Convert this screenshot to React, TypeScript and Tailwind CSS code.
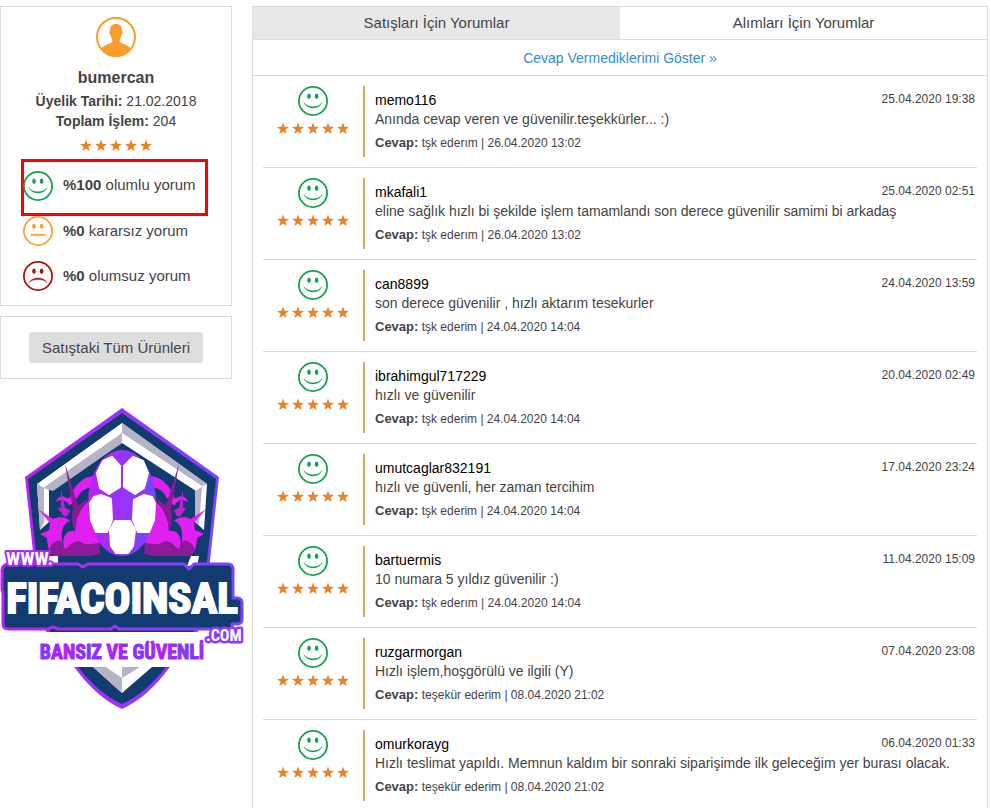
import React from "react";

type Mood = "good" | "neutral" | "bad";

const comments = [
  { user: "memo116", text: "Anında cevap veren ve güvenilir.teşekkürler... :)", reply: "tşk ederım | 26.04.2020 13:02", date: "25.04.2020 19:38" },
  { user: "mkafali1", text: "eline sağlık hızlı bi şekilde işlem tamamlandı son derece güvenilir samimi bi arkadaş", reply: "tşk ederım | 26.04.2020 13:02", date: "25.04.2020 02:51" },
  { user: "can8899", text: "son derece güvenilir , hızlı aktarım tesekurler", reply: "tşk ederim | 24.04.2020 14:04", date: "24.04.2020 13:59" },
  { user: "ibrahimgul717229", text: "hızlı ve güvenilir", reply: "tşk ederim | 24.04.2020 14:04", date: "20.04.2020 02:49" },
  { user: "umutcaglar832191", text: "hızlı ve güvenli, her zaman tercihim", reply: "tşk ederim | 24.04.2020 14:04", date: "17.04.2020 23:24" },
  { user: "bartuermis", text: "10 numara 5 yıldız güvenilir :)", reply: "tşk ederım | 24.04.2020 14:04", date: "11.04.2020 15:09" },
  { user: "ruzgarmorgan", text: "Hızlı işlem,hoşgörülü ve ilgili (Y)", reply: "teşekür ederim | 08.04.2020 21:02", date: "07.04.2020 23:08" },
  { user: "omurkorayg", text: "Hızlı teslimat yapıldı. Memnun kaldım bir sonraki siparişimde ilk geleceğim yer burası olacak.", reply: "teşekür ederim | 08.04.2020 21:02", date: "06.04.2020 01:33" },
];

const moodColors = { good: "#17a150", neutral: "#f9a13a", bad: "#a8160f" };

const Face = ({ mood }: { mood: Mood }) => {
  const color = moodColors[mood];
  return (
    <svg width="30" height="30" viewBox="0 0 30 30" className="shrink-0" aria-hidden="true">
      <circle cx="15" cy="15" r="14.1" fill="none" stroke={color} strokeWidth="1.8" />
      <ellipse cx="11" cy="10.2" rx="1.8" ry="2.8" fill={color} />
      <ellipse cx="18.6" cy="10.2" rx="1.8" ry="2.8" fill={color} />
      {mood === "good" && <path d="M5.800 16.400C9 23.800 21 23.800 24.200 16.400C20.500 22.200 9.500 22.200 5.800 16.400Z" fill={color} stroke={color} strokeWidth="0.4" />}
      {mood === "neutral" && <path d="M7.500 18.800H22.500" stroke={color} strokeWidth="1.800" />}
      {mood === "bad" && <path d="M5.800 21.800C9 15.400 21 15.400 24.200 21.800C20.500 17.400 9.500 17.400 5.800 21.800Z" fill={color} stroke={color} strokeWidth="0.4" />}
    </svg>
  );
};

const Stars = () => (
  <div className="flex justify-center gap-[3px]" role="img" aria-label="5 / 5">
    {Array(5)
      .fill(0)
      .map((_, i) => (
        <svg key={i} width="12" height="13" viewBox="0 0 12 12" aria-hidden="true">
          <path d="M6 0L7.500 4.300L12 4.400L8.400 7.200L9.700 11.600L6 9L2.300 11.600L3.600 7.200L0 4.400L4.500 4.300Z" fill="#e88325" />
        </svg>
      ))}
  </div>
);

const Avatar = () => (
  <svg width="40" height="40" viewBox="0 0 40 40" aria-hidden="true">
    <circle cx="20" cy="20" r="19" fill="#fff" stroke="#fb9d2c" strokeWidth="2" />
    <path d="M20 7C24 7 26.400 9.300 26 14C27.200 14.500 26.700 17.500 25.500 18C25 21 23.500 22 23.500 24C24.500 27.500 32.500 27.500 34.800 31.500C31 37 26 39.500 20 39.500C14 39.500 9 37 5.200 31.500C7.500 27.500 15.500 27.500 16.500 24C16.500 22 15 21 14.500 18C13.300 17.500 12.800 14.500 14 14C13.600 9.300 16 7 20 7Z" fill="#fb9d2c" />
  </svg>
);

// one side of the crest, mirrored for the other
const Wing = () => (
  <g>
    <path d="M93 476C83 477 76 484 71 494L77 499C80 491 85 488 92 487Z" fill="#e01ff0" />
    <path d="M56 502C57 497 62 495 67 498C70 499 71 497 70 495C75 500 75 504 69 505C67 500 61 499 56 502Z" fill="#e01ff0" />
    <path d="M61 489L65 508L61 507ZM58 509C61 506 68 508 70 511L67 516C65 518 62 515 61 512Z" fill="#c31fd3" />
    <path d="M38 509L53 519C59 516 67 517 70 521C63 524 61 530 62 541V556H54C49 552 47 545 47 538L40 534L49 530C50 527 49 525 50 523Z" fill="#e01ff0" />
    <path d="M92 498C84 504 76 513 75 531C66 529 61 538 64 549H99L101 500Z" fill="#e01ff0" />
    <path d="M65 464L78 506L91 496C82 507 76 515 75 531C72 525 71 515 73 509Z" fill="#8a1a96" />
    <path d="M50 550C50 544 54 542 60 540C62 543 62 546 65 549C70 547 71 541 79 541C86 546 91 544 99 543L100 554L88 556H53Z" fill="#8a1a96" />
  </g>
);

const Logo = () => (
  <svg width="250" height="310" viewBox="0 400 250 310" role="img" aria-label="www.fifacoinsal.com">
    <defs>
      <linearGradient id="edge" x1="0" x2="1">
        <stop offset="0" stopColor="#bd20f5" />
        <stop offset="1" stopColor="#7646ff" />
      </linearGradient>
      <linearGradient id="slogan" x1="0" x2="0.15" spreadMethod="reflect">
        <stop offset="0" stopColor="#7a3bff" />
        <stop offset="1" stopColor="#b91df6" />
      </linearGradient>
    </defs>

    {/* shield */}
    <path d="M122 408L219 477L209 570C207 625 193 650 169 668Q148 697 122 709Q96 697 75 668C51 650 37 625 35 570L25 477Z" fill="url(#edge)" />
    <path d="M122 413L216 479L206 570C203 625 190 645 165 668Q146 693 122 704Q98 693 79 668C54 645 41 625 38 570L28 479Z" fill="#123c70" />
    <path d="M122 423L37 484L48 491L122 443Z" fill="#fff" />
    <path d="M122 433L43 488L53 491L122 443Z" fill="#b5b4c5" />
    <path d="M122 423L207 484L196 491L122 443Z" fill="#fff" />
    <path d="M122 423L207 484L202 486L122 433Z" fill="#b5b4c5" />
    <path d="M37 484L49 491V522L40 530Z" fill="#fff" />
    <path d="M37 484L44 488V523L40 530Z" fill="#b5b4c5" />
    <path d="M207 484L195 491V522L204 530Z" fill="#fff" />
    <path d="M202 487L195 491V522L199 525Z" fill="#b5b4c5" />
    <path d="M46 556H58V566H48ZM187 566L191 556H199L197 566Z" fill="#fff" />
    <Wing />
    <g transform="matrix(-1 0 0 1 244 0)">
      <Wing />
    </g>

    {/* ball */}
    <ellipse cx="122" cy="503" rx="34" ry="53" fill="url(#edge)" />
    <g fill="#fff" stroke="#fff" strokeWidth="2" strokeLinejoin="round">
      <path d="M112 457L120 466V487L109 494L100 488L97 473L103 461Z" />
      <path d="M133 457L124 466V487L135 494L144 488L148 473L143 461Z" />
      <path d="M101 495L111 499L112 520L107 532H96L91 520L90 503L94 497Z" />
      <path d="M144 495L134 500L133 520L138 532H149L154 520L155 503L152 497Z" />
      <path d="M115 521H130L135 530L133 546L128 553H116L111 546L110 530Z" />
    </g>

    {/* lower tip, below the white slogan strip */}
    <path d="M0 632H250V667H0Z" fill="#fff" />
    <path d="M93 667H152L122 693Z" fill="#fff" />
    <path d="M93 667H106L122 678V693ZM122 667H140L122 678Z" fill="#b5b4c5" />

    {/* name band */}
    <path d="M9 564H78L83 567L88 564H184L189 569L194 564H228Q233 564 233 569V598H237Q242 598 242 603V619Q242 624 237 624H232V629H119L115 626L111 629H58L53 627L48 629H9Q3 629 3 624V593L2 590V570Q3 564 9 564Z" fill="#123c70" stroke="url(#edge)" strokeWidth="3" strokeLinejoin="round" />
    <g fontFamily="'Roboto Condensed', 'Liberation Sans Narrow', 'Liberation Sans', sans-serif" fontWeight="700">
      <text x="122" y="613" fontSize="43" textAnchor="middle" fill="#fff" stroke="#fff" strokeWidth="2">FIFACOINSAL</text>
      <g paintOrder="stroke" strokeLinejoin="round">
        <text x="6" y="565" fontSize="19" fill="#fff" stroke="#a32bf5" strokeWidth="4">WWW.</text>
        <text x="206" y="641" fontSize="16" fill="#fff" stroke="#8d3cff" strokeWidth="5">.COM</text>
      </g>
      <text x="122" y="659" fontSize="20" textAnchor="middle" fill="url(#slogan)" stroke="url(#slogan)" strokeWidth="1">BANSIZ VE GÜVENLİ</text>
    </g>
  </svg>
);

const Sidebar = () => (
  <aside className="w-[232px] shrink-0">
    <section className="border border-[#ddd] px-[22px] pt-[10px] pb-[14px]">
      <div className="flex flex-col items-center text-sm leading-5">
        <Avatar />
        <h1 className="mt-[11px] mb-[3px] text-base leading-5 font-bold">bumercan</h1>
        <p>
          <b>Üyelik Tarihi:</b> 21.02.2018
        </p>
        <p className="mb-2">
          <b>Toplam İşlem:</b> 204
        </p>
        <Stars />
      </div>
      <ul className="mt-[7px] text-[15px]">
        <li className="mr-px -ml-[2px] flex h-[57px] items-center gap-[10px] border-3 border-[#f00] pb-1">
          <span className="-ml-px flex">
            <Face mood="good" />
          </span>
          <span className="whitespace-nowrap">
            <b>%100</b> olumlu yorum
          </span>
        </li>
        <li className="flex h-[30px] items-center gap-[10px]">
          <Face mood="neutral" />
          <span>
            <b>%0</b> kararsız yorum
          </span>
        </li>
        <li className="mt-[15px] flex h-[30px] items-center gap-[10px]">
          <Face mood="bad" />
          <span>
            <b>%0</b> olumsuz yorum
          </span>
        </li>
      </ul>
    </section>
    <section className="mt-[10px] flex justify-center border border-[#ddd] py-[15px]">
      <button type="button" className="h-[31px] rounded-[3px] bg-[#ddd] px-[13px] pt-px text-[15px]">
        Satıştaki Tüm Ürünleri
      </button>
    </section>
    <div className="mt-[21px]">
      <Logo />
    </div>
  </aside>
);

const App = () => {
  return (
    <div className="flex h-screen items-start gap-5 overflow-hidden bg-white pt-[6px] pr-[3px] font-['Liberation_Sans',Arial,sans-serif] text-[#444]">
      <Sidebar />
      <main className="min-w-0 flex-1 border border-[#ddd]">
        <div className="grid grid-cols-2 border-b border-[#ddd] text-[15px]" role="tablist">
          <button type="button" role="tab" aria-selected="true" className="h-8 bg-[#e8e8e8]">
            Satışları İçin Yorumlar
          </button>
          <button type="button" role="tab" aria-selected="false" className="h-8">
            Alımları İçin Yorumlar
          </button>
        </div>
        <div className="flex h-9 items-center justify-center border-b border-[#ddd]">
          <a href="#" className="text-sm text-[#2f8fcb]">
            Cevap Vermediklerimi Göster »
          </a>
        </div>
        <ul className="px-[10px]">
          {comments.map((item) => (
            <li key={item.user} className="flex border-b border-[#ddd] py-[10px]">
              <div className="flex w-[100px] shrink-0 flex-col items-center gap-[6px]">
                <Face mood="good" />
                <Stars />
              </div>
              <div className="h-[71px] min-w-0 flex-1 border-l-2 border-[#dea656] pt-[5px] pl-[10px] text-sm leading-[19px]">
                <p className="text-black">{item.user}</p>
                <p>{item.text}</p>
                <p className="mt-1 text-xs leading-[19px]">
                  <b className="text-[13px]">Cevap:</b> {item.reply}
                </p>
              </div>
              <time className="-ml-[100px] w-[100px] shrink-0 pt-[3px] pr-[2px] text-right text-xs leading-5">{item.date}</time>
            </li>
          ))}
        </ul>
      </main>
    </div>
  );
};

export default App;
